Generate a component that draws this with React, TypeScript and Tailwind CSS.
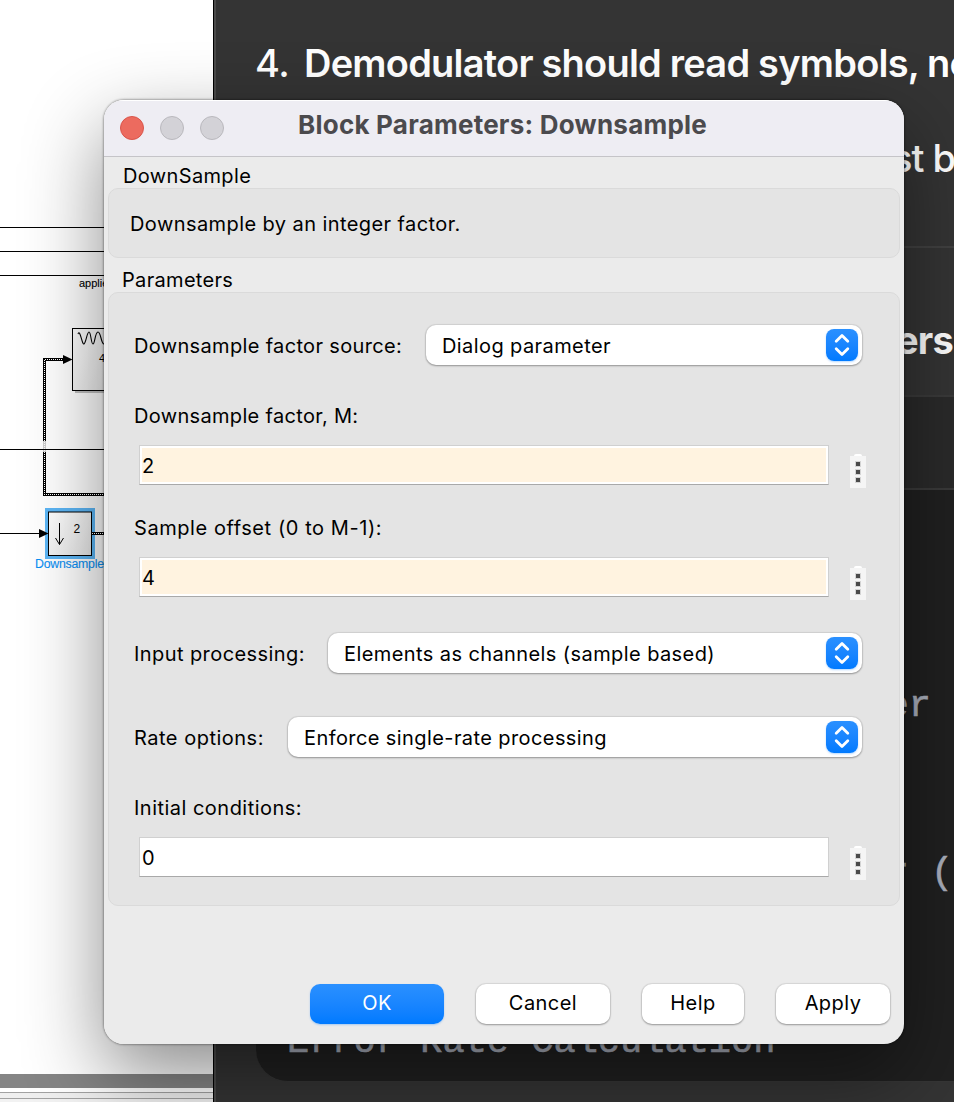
import React from "react";

const ui = "font-['Inter','Liberation_Sans',sans-serif]";

function Diagram() {
  return (
    <svg className="block" width="213" height="1074" viewBox="0 0 213 1074" fontFamily="Liberation Sans, Arial, sans-serif">
      <defs>
        <linearGradient id="block" x1="0" y1="0" x2="1" y2="1">
          <stop offset="0" stopColor="#ffffff" />
          <stop offset="1" stopColor="#e8e8e8" />
        </linearGradient>
      </defs>
      <g stroke="#000" strokeWidth="1" shapeRendering="crispEdges">
        <path d="M0 227.5H110M0 251.5H110M0 275.5H110M0 449.5H110M0 533.5H42" />
      </g>
      <text x="79" y="287" fontSize="11" stroke="#000" strokeWidth="0.1">applied</text>
      <rect x="75" y="331" width="60" height="62" fill="#000" opacity=".25" />
      <rect x="72.5" y="328.500" width="60" height="62" fill="url(#block)" stroke="#000" />
      <path d="M78 334C80 328 82 345 84 344S87 332 89 332S91 344 93 344S95 332 98 332S101 344 104 344" fill="none" stroke="#000" strokeWidth="1.1" />
      <text x="99" y="362" fontSize="11">4</text>
      <path d="M64 359.500H44.500V494.500H110" fill="none" stroke="#000" strokeWidth="3" />
      <path d="M64 359.500H44.500V494.500H110" fill="none" stroke="#fff" strokeWidth="1" strokeDasharray="1 1" shapeRendering="crispEdges" />
      <rect x="42" y="441" width="5" height="8" fill="#fff" opacity=".8" />
      <rect x="42" y="450" width="5" height="2" fill="#fff" opacity=".8" />
      <path d="M63 355L72.500 359.500L63 364Z" />
      <rect x="45" y="508" width="50" height="51" fill="#5cb6f6" />
      <rect x="48.500" y="512" width="43" height="43.500" fill="url(#block)" stroke="#000" />
      <path d="M59.500 523V544.500M55.500 538L59.500 544.500L63.500 538" fill="none" stroke="#000" strokeWidth="1" />
      <text x="73.500" y="533" fontSize="12">2</text>
      <path d="M39 529L48.500 533.500L39 538Z" />
      <path d="M92 533.500H110" stroke="#000" strokeWidth="3" />
      <path d="M92 533.500H110" stroke="#fff" strokeDasharray="1 1" shapeRendering="crispEdges" />
      <text x="35" y="568" fontSize="12.300" fill="#0a90f5" stroke="#0a90f5" strokeWidth="0.1" textLength="69" lengthAdjust="spacing">Downsample</text>
    </svg>
  );
}

function ModelWindow() {
  return (
    <div className="h-full w-[213px] shrink-0 bg-white">
      <Diagram />
      <div className="h-[14px] bg-[#858585]" />
      <div className="mt-1 h-px bg-[#a2a2a2]" />
      <div className="h-[5px] bg-[#efefef]" />
      <div className="h-px bg-[#a2a2a2]" />
      <div className="h-[3px] bg-[#f2f2f2]" />
    </div>
  );
}

function ChatWindow() {
  return (
    <div className={`relative flex h-full w-[741px] shrink-0 flex-col overflow-hidden border-l border-black bg-[#343434] text-white ${ui}`}>
      <div className="absolute inset-y-0 left-0 w-[2px] bg-[#4a4a4a]" />
      <div className="flex h-[127px] items-start pl-[41px] pt-[39px] text-[38px] leading-[48px] whitespace-nowrap">
        <span className="w-[49px] shrink-0 font-medium tracking-[-0.5px]">4.</span>
        <span className="shrink-0 font-semibold tracking-[-0.78px]">Demodulator should read symbols, no</span>
      </div>
      <div className="h-[119px] pl-[678px] pt-[7px] text-[38px] font-medium leading-[48px] tracking-[-1px] whitespace-nowrap">st b</div>
      <div className="ml-[42px] h-[2px] shrink-0 bg-[#414141]" />
      <div className="h-[147px] shrink-0 pl-[682px] pt-[68px] text-[38px] font-bold leading-[48px] tracking-[-0.8px] whitespace-nowrap">ers</div>
      <div className="ml-[42px] h-[687px] w-[760px] shrink-0 overflow-hidden rounded-bl-[32px] border-b border-[#363636] bg-[#202020]">
        <div className="h-[95px] border-y-2 border-[#3a3a3a] bg-[#2a2a2a]" />
        <pre className="pt-[188px] pl-[31px] font-['Liberation_Mono',monospace] text-[37px] leading-[56px] text-[#abb0bd] [-webkit-text-stroke:0.6px_#abb0bd]">
          <div className="h-[56px]">{" ".repeat(27)}er</div>
          <div className="h-[112px]" />
          <div className="h-[56px] -mt-px">{" ".repeat(27)}r (</div>
          <div className="h-[112px]" />
          <div className="h-[56px] pt-px">Error Rate Calculation</div>
        </pre>
      </div>
    </div>
  );
}

function Select({ value, className }: { value: string; className: string }) {
  return (
    <button className={`flex h-10 items-center justify-between rounded-[10px] bg-white pl-4 pr-1 text-left shadow-[0_0_1px_1px_rgba(0,0,0,0.08),0_1px_2px_rgba(0,0,0,0.3)] ${className}`}>
      <span className="pt-[2px] tracking-[0.41px]">{value}</span>
      <span className="flex size-8 items-center justify-center rounded-[8px] bg-linear-to-b from-[#2a90ff] to-[#007aff] shadow-[0_1px_2px_rgba(0,122,255,0.3)]">
        <svg width="32" height="32" viewBox="0 0 32 32" fill="none" stroke="#fff" strokeWidth="2.800" strokeLinecap="round" strokeLinejoin="round">
          <path d="M10.200 12.300L16 6.500L21.800 12.300M10.200 19.700L16 25.500L21.800 19.700" />
        </svg>
      </span>
    </button>
  );
}

function Field({ label, value, bg, tracking }: { label: string; value: string; bg: string; tracking: string }) {
  return (
    <div className="pl-[25px]">
      <div className={`h-10 leading-[40px] ${tracking}`}>{label}</div>
      <div className="flex pt-[9px] pl-[5px]">
        <div className="h-10 w-[690px] border border-b-[#a9a9a9] border-[#d0d0d0] bg-white p-[2px]">
          <div className={`flex h-[34px] items-center pt-[2px] ${bg}`}>{value}</div>
        </div>
        <div className="ml-[21px] flex w-4 flex-col items-center pt-[8px]">
          <div className="mt-px h-[2px] w-2 rounded-t-full bg-white" />
          <div className="flex h-8 w-4 flex-col items-center gap-[4px] bg-[#f5f5f5] pt-[6px]">
            <i className="size-1 bg-[#4a4a4a] shadow-[0_0_0_1px_#d4d4d4]" />
            <i className="size-1 bg-[#4a4a4a] shadow-[0_0_0_1px_#d4d4d4]" />
            <i className="size-1 bg-[#4a4a4a] shadow-[0_0_0_1px_#d4d4d4]" />
          </div>
        </div>
      </div>
    </div>
  );
}

function Dialog() {
  return (
    <div className={`absolute left-[104px] top-[100px] flex h-[944px] w-[800px] flex-col overflow-hidden rounded-[20px] bg-[#ebebeb] text-[20px] leading-[24px] tracking-[0.42px] whitespace-nowrap text-black ${ui}`}>
      <header className="flex h-[57px] shrink-0 border-b border-[#c5c4c8] bg-[#eeedf3] pl-4 pt-4 shadow-[inset_0_1px_0_#fff]">
        <div className="flex gap-4">
          <i className="size-6 rounded-full border border-[#d9554b] bg-[#ec6b5f]" />
          <i className="size-6 rounded-full border border-[#b9b8bd] bg-[#d3d2d7]" />
          <i className="size-6 rounded-full border border-[#b9b8bd] bg-[#d3d2d7]" />
        </div>
        <h1 className="-mt-[6px] ml-[74px] text-[26px] leading-[30px] font-bold tracking-[0.23px] text-[#4b4a4d]">Block Parameters: Downsample</h1>
      </header>
      <div className="h-[31px] pt-[7px] pl-[19px] tracking-[0.36px]">DownSample</div>
      <section className="mx-1 h-[70px] shrink-0 rounded-[10px] border border-[#dadada] bg-[#e4e4e4] pt-[23px] pl-[21px]">Downsample by an integer factor.</section>
      <div className="h-[34px] pt-[10px] pl-[18px] tracking-[0.32px]">Parameters</div>
      <section className="mx-1 h-[614px] shrink-0 rounded-[10px] border border-[#dadada] bg-[#e4e4e4]">
        <div className="mt-[32px] flex h-10 items-center pl-[25px]">
          <span className="w-[292px] pt-[2px] tracking-[0.34px]">Downsample factor source:</span>
          <Select value="Dialog parameter" className="w-[436px]" />
        </div>
        <div className="h-[31px]" />
        <Field label="Downsample factor, M:" value="2" bg="bg-[#fff3e0]" tracking="tracking-[0.33px]" />
        <div className="h-[20px]" />
        <Field label="Sample offset (0 to M-1):" value="4" bg="bg-[#fff3e0]" tracking="tracking-[0.57px]" />
        <div className="mt-[33px] flex h-10 items-center pl-[25px]">
          <span className="w-[194px] pt-[2px]">Input processing:</span>
          <Select value="Elements as channels (sample based)" className="w-[534px]" />
        </div>
        <div className="mt-[44px] flex h-10 items-center pl-[25px]">
          <span className="w-[154px] pt-[2px] tracking-[0.5px]">Rate options:</span>
          <Select value="Enforce single-rate processing" className="w-[574px]" />
        </div>
        <div className="h-[31px]" />
        <Field label="Initial conditions:" value="0" bg="bg-white" tracking="tracking-[0.48px]" />
      </section>
      <footer className="flex pt-[78px] pl-[206px] [&>button]:h-10 [&>button]:rounded-[10px] [&>button]:pb-[2px] [&>button]:tracking-[0.45px]">
        <button className="w-[134px] bg-linear-to-b from-[#2a90ff] to-[#007aff] text-white shadow-[0_1px_2px_rgba(0,122,255,0.3)]">OK</button>
        <button className="ml-8 w-[134px] bg-white shadow-[0_0_1px_1px_rgba(0,0,0,0.08),0_1px_2px_rgba(0,0,0,0.3)]">Cancel</button>
        <button className="ml-8 w-[102px] bg-white shadow-[0_0_1px_1px_rgba(0,0,0,0.08),0_1px_2px_rgba(0,0,0,0.3)]">Help</button>
        <button className="ml-8 w-[114px] bg-white shadow-[0_0_1px_1px_rgba(0,0,0,0.08),0_1px_2px_rgba(0,0,0,0.3)]">Apply</button>
      </footer>
    </div>
  );
}

export default function App() {
  return (
    <main className="relative flex h-[1102px] w-[954px] overflow-hidden bg-white">
      <ModelWindow />
      <ChatWindow />
      <div className="absolute left-[104px] top-[100px] h-[944px] w-[800px] rounded-[20px] shadow-[0_0_2px_1px_rgba(0,0,0,0.3),0_30px_80px_rgba(0,0,0,0.46)]" />
      <Dialog />
    </main>
  );
}
